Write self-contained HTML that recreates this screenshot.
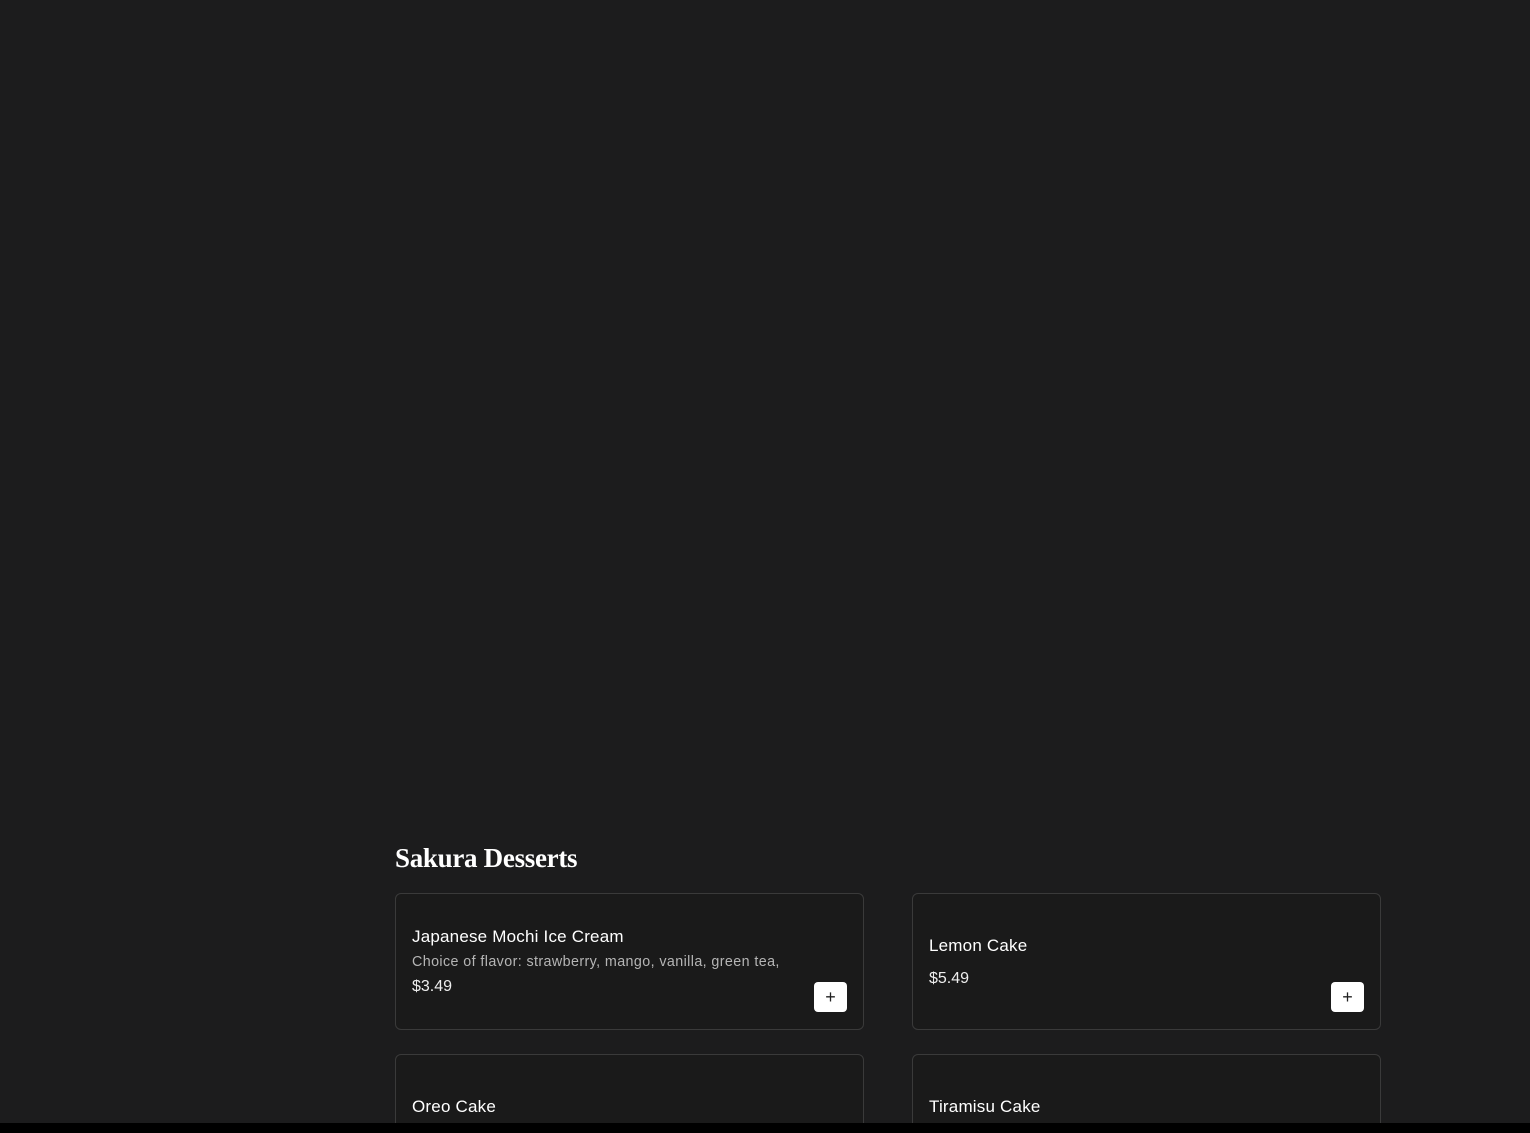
<!DOCTYPE html>
<html><head><style>
html,body{margin:0;padding:0;width:1530px;height:1133px;overflow:hidden;background:#1c1c1d;font-family:"Liberation Sans",sans-serif;color:#fff}
#w{position:absolute;left:0;top:0;width:1530px;height:1123px;overflow:hidden}
h2{position:absolute;left:395px;top:843px;margin:0;font-family:"Liberation Serif",serif;font-weight:900;font-size:27px;letter-spacing:-0.3px}
.card{position:absolute;width:469px;height:137px;border:1px solid #3a3a3a;border-radius:6px;background:#1a1a1a;box-sizing:border-box}
.t{position:absolute;left:16px;font-size:17px;color:#fff;letter-spacing:0.2px}
.d{position:absolute;left:16px;font-size:14.3px;color:#b5b5b5;letter-spacing:0.4px}
.p{position:absolute;left:16px;font-size:16px;color:#eee}
.b{position:absolute;right:16px;top:88px;width:33px;height:30px;background:#fff;border-radius:4px;color:#222;font-size:18px;text-align:center;line-height:30px}
.bar{position:absolute;left:0;top:1123px;width:1530px;height:10px;background:#000}
</style></head><body>
<div id="w">
<h2>Sakura Desserts</h2>
<div class="card" style="left:395px;top:893px">
<div class="t" style="top:33px">Japanese Mochi Ice Cream</div>
<div class="d" style="top:60px">Choice of flavor: strawberry, mango, vanilla, green tea,</div>
<div class="p" style="top:84px">$3.49</div>
<div class="b">+</div></div>
<div class="card" style="left:912px;top:893px">
<div class="t" style="top:42px">Lemon Cake</div>
<div class="p" style="top:76px">$5.49</div>
<div class="b">+</div></div>
<div class="card" style="left:395px;top:1054px">
<div class="t" style="top:42px">Oreo Cake</div></div>
<div class="card" style="left:912px;top:1054px">
<div class="t" style="top:42px">Tiramisu Cake</div></div>
</div>
<div class="bar"></div>
</body></html>
